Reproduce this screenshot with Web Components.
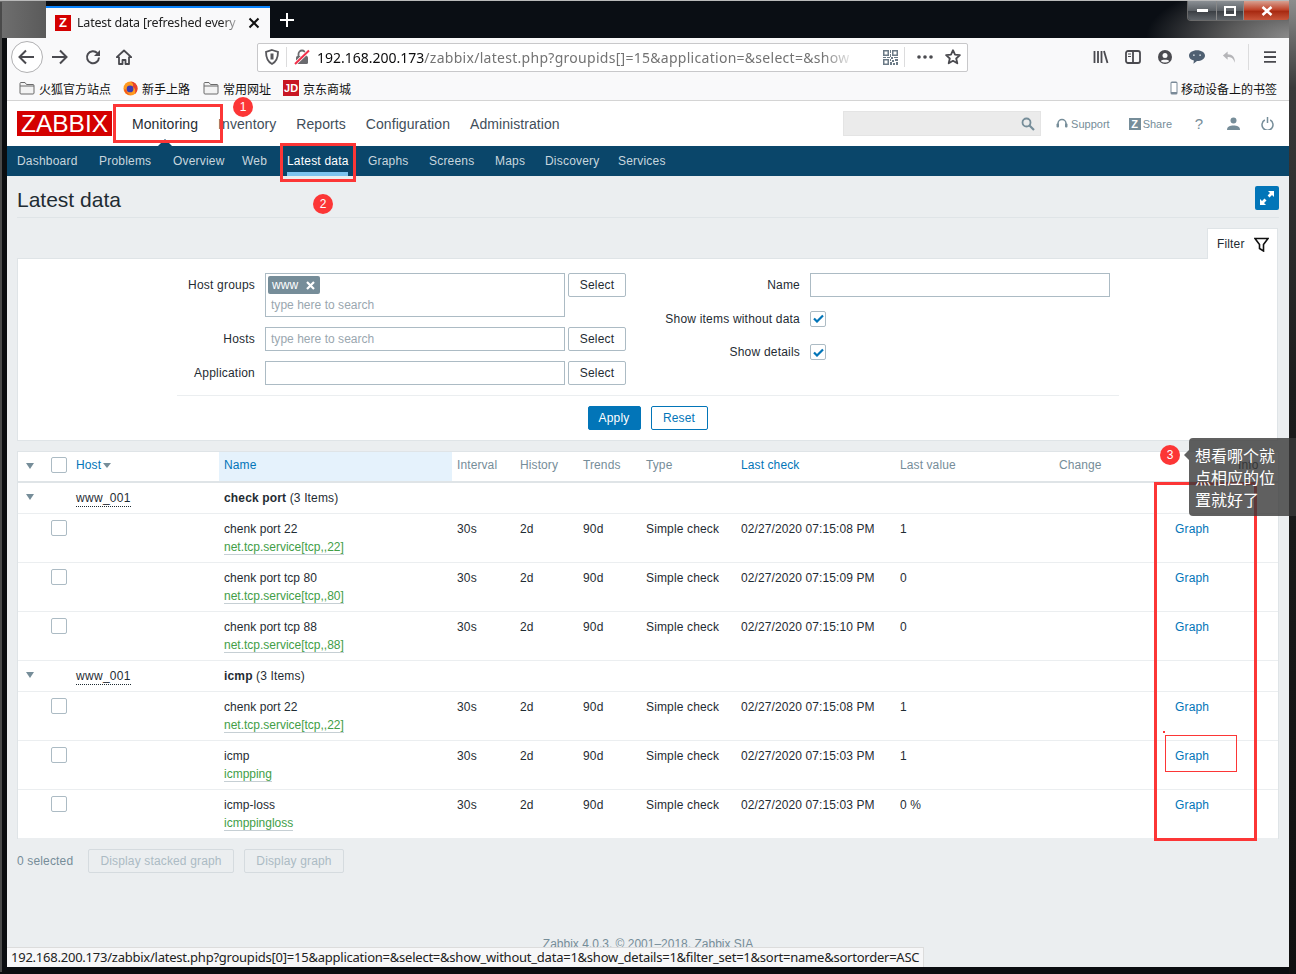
<!DOCTYPE html>
<html>
<head>
<meta charset="utf-8">
<title>Latest data</title>
<style>
html, body { margin: 0; padding: 0; background: #0a0e14; }
body { font-family: "Liberation Sans", Arial, sans-serif; font-size: 12px; }
</style>
</head>
<body>

<browser-frame>
  <zbx-header></zbx-header>
  <zbx-nav></zbx-nav>
  <zbx-content>
    <zbx-title></zbx-title>
    <zbx-filter></zbx-filter>
    <zbx-table>
      <zbx-head></zbx-head>
      <zbx-group host="www_001" app="check port"></zbx-group>
      <zbx-item name="chenk port 22" key="net.tcp.service[tcp,,22]" check="02/27/2020 07:15:08 PM" value="1"></zbx-item>
      <zbx-item name="chenk port tcp 80" key="net.tcp.service[tcp,,80]" check="02/27/2020 07:15:09 PM" value="0"></zbx-item>
      <zbx-item name="chenk port tcp 88" key="net.tcp.service[tcp,,88]" check="02/27/2020 07:15:10 PM" value="0"></zbx-item>
      <zbx-group host="www_001" app="icmp"></zbx-group>
      <zbx-item name="chenk port 22" key="net.tcp.service[tcp,,22]" check="02/27/2020 07:15:08 PM" value="1"></zbx-item>
      <zbx-item name="icmp" key="icmpping" check="02/27/2020 07:15:03 PM" value="1"></zbx-item>
      <zbx-item name="icmp-loss" key="icmppingloss" check="02/27/2020 07:15:03 PM" value="0 %"></zbx-item>
    </zbx-table>
    <zbx-actions></zbx-actions>
    <zbx-footer></zbx-footer>
  </zbx-content>
  <note-layer></note-layer>
</browser-frame>

<script>
// icons used in more than one element
const folderIcon = `<svg width="16" height="14" viewBox="0 0 16 14"><path d="M1 2.500C1 1.700 1.500 1.500 2 1.500h4l1.500 2H14c.6 0 1 .4 1 1V12c0 .6-.4 1-1 1H2c-.6 0-1-.4-1-1z" fill="#f3f3f3" stroke="#6b6b6b"/><path d="M1 5h14" stroke="#6b6b6b"/></svg>`;

class BrowserFrame extends HTMLElement {
  constructor() {
    super();
    this.attachShadow({ mode: 'open' }).innerHTML = `
    <style>
      :host { display: flex; flex-direction: column; position: relative; width: 1296px; height: 974px; overflow: hidden;
        background: #0b0d10; font-family: "Liberation Sans", Arial, sans-serif; }
      .side-l { position: absolute; left: 0; top: 2px; bottom: 2px; width: 2px; background: #4a4a4a; }
      .side-r { position: absolute; right: 0; top: 0; bottom: 0; width: 7px; background: linear-gradient(#8d8d8d, #3a3a3a 9%, #1c1c1c 40%, #101010); }
      .titlebar { height: 38px; flex: none; display: flex; position: relative; padding-left: 46px; box-sizing: border-box;
        border-top: 1px solid #b9b9b9;
        background: radial-gradient(150px 60px at 100% 100%, #8f8f8f, #5a5a5a 45%, rgba(10,14,20,0) 100%),
          linear-gradient(90deg, #6f6f6f, #5a5a5a 46px, #0a0e14 46px); }
      .tab { width: 224px; height: 32px; margin-top: 5px; background: #f9f9fa; border-top: 2px solid #0a84ff; box-sizing: border-box;
        display: flex; align-items: center; padding-left: 9px; }
      .fav { width: 16px; height: 16px; background: #d40000; color: #fff; font: bold 13px/16px "Liberation Sans", sans-serif; text-align: center; flex: none; }
      .tab-text { width: 161px; margin: -1px 0 0 6px; font: 12.500px "Noto Sans", sans-serif; color: #222; white-space: nowrap; overflow: hidden; letter-spacing: -.2px;
        -webkit-mask-image: linear-gradient(90deg, #000 90%, rgba(0,0,0,.25)); }
      .tab svg { margin-left: 10px; }
      .plus { margin: 12px 0 0 10px; }
      .ctl { position: absolute; top: 0; right: 6px; display: flex; height: 19px; border: 1px solid #6a6a6a; border-top: 0; border-radius: 0 0 4px 4px; overflow: hidden; }
      .ctl div { display: flex; align-items: center; justify-content: center; border-right: 1px solid #888;
        background: linear-gradient(#8a8f94, #5c6166 50%, #3c4045 55%, #5f6469); }
      .ctl .mn { width: 28px; } .ctl .mx { width: 26px; }
      .ctl .cl { width: 45px; border: 0; background: linear-gradient(#d8a090, #c0452c 45%, #a82a12 55%, #c8553a); }
      .body { flex: 1; margin: 0 7px 7px; display: flex; flex-direction: column; min-height: 0; background: #f9f9fa; }
      .toolbar { height: 38px; flex: none; display: flex; align-items: center; padding: 0 11px 0 4px; box-sizing: border-box; }
      .back { width: 32px; height: 32px; border-radius: 50%; border: 1px solid #b1b1b3; background: #fff; display: flex; align-items: center; justify-content: center; flex: none; box-sizing: border-box; }
      .tb { flex: none; display: flex; }
      .url { margin-left: 125px; width: 711px; height: 29px; background: #fff; border: 1px solid #c8c8ca; border-radius: 2px; box-sizing: border-box; display: flex; align-items: center; flex: none; padding-left: 7px; }
      .sep { width: 1px; height: 20px; background: #dcdcdd; flex: none; }
      .addr { width: 532px; margin: 1px 0 0 7px; font: 14px "Noto Sans", sans-serif; white-space: nowrap; overflow: hidden; color: #737373; flex: none; letter-spacing: .28px;
        -webkit-mask-image: linear-gradient(90deg, #000 95%, rgba(0,0,0,.2)); }
      .addr b { font-weight: normal; color: #0c0c0d; letter-spacing: 0; }
      .bookmarks { height: 24px; flex: none; display: flex; align-items: center; padding: 0 12px 0 13px; border-bottom: 1px solid #d4d4d4; font: 12px "Noto Sans CJK SC", sans-serif; color: #111; box-sizing: content-box; }
      .bm { display: flex; align-items: center; gap: 4px; margin-right: 12px; }
      .jd { width: 16px; height: 16px; background: #c81623; color: #fff; font: bold 11px/16px "Liberation Sans", sans-serif; text-align: center; }
      .mobile { margin-left: auto; display: flex; align-items: center; gap: 3px; }
      .page { flex: 1; min-height: 0; overflow: hidden; background: #ebeef0; display: flex; flex-direction: column; letter-spacing: .15px; }
      .status { position: absolute; left: 7px; bottom: 7px; height: 20px; width: 917px; box-sizing: border-box; background: #f7f7f8; border-top: 1px solid #dcdcdc; border-right: 1px solid #dcdcdc;
        font: 13px/19px "Noto Sans", sans-serif; color: #222; padding-left: 4px; white-space: nowrap; overflow: hidden; letter-spacing: -.233px; }
    </style>
    <div class="titlebar">
      <div class="tab">
        <div class="fav">Z</div>
        <div class="tab-text">Latest data [refreshed every</div>
        <svg width="12" height="12" viewBox="0 0 12 12"><path d="M1.500 1.500l9 9M10.500 1.500l-9 9" stroke="#111" stroke-width="2"/></svg>
      </div>
      <svg class="plus" width="14" height="14" viewBox="0 0 14 14"><path d="M7 0v14M0 7h14" stroke="#fff" stroke-width="2"/></svg>
      <div class="ctl">
        <div class="mn"><svg width="11" height="5"><rect y="1" width="11" height="3" fill="#fff"/></svg></div>
        <div class="mx"><svg width="12" height="10"><rect x="1" y="1" width="10" height="8" fill="none" stroke="#fff" stroke-width="2"/></svg></div>
        <div class="cl"><svg width="12" height="10" viewBox="0 0 12 10"><path d="M1.500 1l9 8M10.500 1l-9 8" stroke="#fff" stroke-width="2.600"/></svg></div>
      </div>
    </div>
    <div class="side-l"></div>
    <div class="side-r"></div>
    <div class="body">
      <div class="toolbar">
        <div class="back"><svg width="18" height="18" viewBox="0 0 18 18"><path d="M1.500 9H16M8 2.500 1.500 9 8 15.500" fill="none" stroke="#4a4a4f" stroke-width="2"/></svg></div>
        <svg class="tb" style="margin-left:7px" width="18" height="18" viewBox="0 0 18 18"><path d="M2 9h14.500M10 2.500 16.500 9 10 15.500" fill="none" stroke="#4a4a4f" stroke-width="2"/></svg>
        <svg class="tb" style="margin-left:17px" width="16" height="16" viewBox="0 0 16 16"><path d="M14 8.500A6 6 0 1 1 12.300 4" fill="none" stroke="#4a4a4f" stroke-width="2"/><path d="M15 1v6H9z" fill="#4a4a4f"/></svg>
        <svg class="tb" style="margin-left:15px" width="16" height="16" viewBox="0 0 16 16"><path d="M8 1.500.8 8.200h2.200V15h3.500v-4h3v4H13V8.200h2.200z" fill="none" stroke="#4a4a4f" stroke-width="1.800" stroke-linejoin="round"/></svg>
        <div class="url">
          <svg width="14" height="16" viewBox="0 0 14 16"><path d="M7 1 13 2.800C13 9 11 13 7 15 3 13 1 9 1 2.800z" fill="none" stroke="#58585c" stroke-width="1.800"/><path d="M7 4.500v6" stroke="#58585c" stroke-width="3"/></svg>
          <div class="sep" style="margin-left:7px"></div>
          <svg style="margin-left:7px;flex:none" width="16" height="16" viewBox="0 0 16 16"><path d="M4.500 7V5a3.500 3.500 0 0 1 7 0v2" fill="none" stroke="#6a6a6e" stroke-width="1.800"/><rect x="2" y="7" width="12" height="8" rx="1.500" fill="#6a6a6e"/><path d="M1 15 15 1.500" stroke="#fff" stroke-width="3.500"/><path d="M1 15 15 1.500" stroke="#f0304a" stroke-width="2"/></svg>
          <div class="addr"><b>192.168.200.173</b>/zabbix/latest.php?groupids[]=15&amp;application=&amp;select=&amp;show</div>
          <svg style="margin-left:34px;flex:none" width="15" height="15" viewBox="0 0 15 15" fill="#6b7a86"><path d="M0 0h6v6H0zm1.500 1.500v3h3v-3zM9 0h6v6H9zm1.500 1.500v3h3v-3zM0 9h6v6H0zm1.500 1.500v3h3v-3z" fill-rule="evenodd"/><path d="M7 0h1v3H7zM7 4h1v3H7zM0 7h3v1H0zM4 7h3v1H4zM8 7h2v2H8zM11 7h4v1h-4zM7 9h1v2H7zM9 10h2v2H9zM12 9h3v2h-3zM7 12h2v3H7zM10 13h2v2h-2zM13 12h2v3h-2z"/></svg>
          <div class="sep" style="margin-left:6px"></div>
          <svg style="margin-left:12px;flex:none" width="16" height="4" viewBox="0 0 16 4" fill="#4a4a4f"><circle cx="2" cy="2" r="1.800"/><circle cx="8" cy="2" r="1.800"/><circle cx="14" cy="2" r="1.800"/></svg>
          <svg style="margin-left:12px;flex:none" width="16" height="16" viewBox="0 0 16 16"><path d="M8 1.200 10 5.700l4.900.5-3.700 3.300 1.100 4.800L8 11.800l-4.300 2.500 1.100-4.800L1.100 6.200 6 5.700z" fill="none" stroke="#4a4a4f" stroke-width="1.800" stroke-linejoin="round"/></svg>
        </div>
        <svg class="tb" style="margin-left:125px" width="16" height="14" viewBox="0 0 16 14"><path d="M1.500 1v12M5 1v12M8.500 1v12M11 1l3.500 12" stroke="#4a4a4f" stroke-width="1.800" fill="none"/></svg>
        <svg class="tb" style="margin-left:16px" width="16" height="14" viewBox="0 0 16 14"><rect x="1" y="1" width="14" height="12" rx="2" fill="none" stroke="#4a4a4f" stroke-width="1.800"/><path d="M8 1v12" stroke="#4a4a4f" stroke-width="1.800"/><path d="M3 4h3M3 6.500h3" stroke="#4a4a4f"/></svg>
        <svg class="tb" style="margin-left:17px" width="14" height="14" viewBox="0 0 14 14"><circle cx="7" cy="7" r="7" fill="#4a4a4f"/><circle cx="7" cy="5.500" r="2.500" fill="#f9f9fa"/><path d="M2.800 11.200C3.500 9.300 10.500 9.300 11.200 11.200 9 13 5 13 2.800 11.200z" fill="#f9f9fa"/></svg>
        <svg class="tb" style="margin-left:17px" width="16" height="14" viewBox="0 0 18 15"><path d="M9 0c5 0 9 2.600 9 6s-4 6-9 6l-4 3 .5-3.500C2 10.500 0 8.500 0 6c0-3.400 4-6 9-6z" fill="#4f6072"/><g fill="#c9d2da"><circle cx="5.500" cy="5.500" r="1"/><circle cx="12.500" cy="5.500" r="1"/></g></svg>
        <svg class="tb" style="margin-left:17px" width="15" height="14" viewBox="0 0 16 14"><path d="M6 1 1 5.500 6 10V7c3.500 0 6 1 7.500 6C14.500 7.500 11 4 6 4z" fill="#b5b5b8"/></svg>
        <div class="sep" style="margin-left:11px;height:26px"></div>
        <svg class="tb" style="margin-left:15px" width="12" height="12" viewBox="0 0 12 12"><path d="M0 1.200h12M0 6h12M0 10.800h12" stroke="#4a4a4f" stroke-width="1.800"/></svg>
      </div>
      <div class="bookmarks">
        <div class="bm" style="margin-left:-1px">${folderIcon}<span>火狐官方站点</span></div>
        <div class="bm" style="margin-right:13px">
          <svg width="15" height="15" viewBox="0 0 16 16"><circle cx="8" cy="8" r="7.500" fill="#ff9a1f"/><path d="M8 .5A7.500 7.500 0 0 1 15.500 8c0 2-1 4.500-3 6C14 11 13 7 10 6 12 4 10 1.500 8 .5z" fill="#e8412c"/><circle cx="7.500" cy="8.500" r="3.600" fill="#3d3bb0"/><path d="M1 9c1 4 4 6 8 6-3-.5-5-2.500-5.500-6z" fill="#f5541f"/></svg>
          <span>新手上路</span>
        </div>
        <div class="bm">${folderIcon}<span>常用网址</span></div>
        <div class="bm"><div class="jd">JD</div><span>京东商城</span></div>
        <div class="mobile">
          <svg width="8" height="14" viewBox="0 0 8 14"><rect x=".5" y=".5" width="7" height="13" rx="1.500" fill="#7a8a98" /><rect x="1.500" y="2" width="5" height="9" fill="#fff"/></svg>
          <span>移动设备上的书签</span>
        </div>
      </div>
      <div class="page"><slot></slot></div>
      <div class="status">192.168.200.173/zabbix/latest.php?groupids[0]=15&amp;application=&amp;select=&amp;show_without_data=1&amp;show_details=1&amp;filter_set=1&amp;sort=name&amp;sortorder=ASC</div>
    </div>`;
  }
}

class ZbxHeader extends HTMLElement {
  constructor() {
    super();
    this.attachShadow({ mode: 'open' }).innerHTML = `
    <style>
      :host { display: flex; align-items: center; height: 45px; flex: none; background: #fff; padding: 0 15px 0 10px; position: relative; color: #44525e; letter-spacing: 0; }
      .logo { width: 95px; height: 25px; background: #d40000; color: #fff; font: 24.500px/26px "Liberation Sans", sans-serif; text-align: center; flex: none; }
      nav { display: flex; gap: 20px; margin-left: 20px; font-size: 14px; color: #3f4e5a; letter-spacing: .07px; }
      nav .on { color: #1f2c33; }
      .tri { position: absolute; left: 151px; bottom: 0; width: 0; height: 0; border: 7px solid transparent; border-top: 0; border-bottom: 7px solid #0a466a; }
      .search { margin-left: auto; width: 198px; height: 25px; background: #ebebeb; border: 1px solid #e4e4e4; box-sizing: border-box; display: flex; align-items: center; justify-content: flex-end; padding-right: 5px; }
      .side { display: flex; align-items: center; margin-left: 15px; color: #768d99; font-size: 11px; gap: 3px; }
      .zb { width: 12px; height: 12px; background: #768d99; color: #fff; font: bold 11px/12px "Liberation Sans", sans-serif; text-align: center; }
      .q { font-size: 15px; width: 10px; justify-content: center; }
    </style>
    <div class="logo">ZABBIX</div>
    <nav><span class="on">Monitoring</span><span>Inventory</span><span>Reports</span><span>Configuration</span><span>Administration</span></nav>
    <div class="tri"></div>
    <div class="search"><svg width="14" height="14" viewBox="0 0 14 14"><circle cx="5.500" cy="5.500" r="4" fill="none" stroke="#768d99" stroke-width="1.800"/><path d="M8.500 8.500 13 13" stroke="#768d99" stroke-width="2.200"/></svg></div>
    <div class="side"><svg width="12" height="12" viewBox="0 0 12 12"><path d="M2 8V5.500a4 4 0 0 1 8 0V8" fill="none" stroke="#768d99" stroke-width="1.500"/><rect x="0.500" y="5.500" width="2.500" height="4" rx="1" fill="#768d99"/><rect x="9" y="5.500" width="2.500" height="4" rx="1" fill="#768d99"/></svg><span>Support</span></div>
    <div class="side" style="margin-left:19px;gap:2px"><div class="zb">Z</div><span>Share</span></div>
    <div class="side q" style="margin-left:22px">?</div>
    <div class="side" style="margin-left:23px"><svg width="13" height="13" viewBox="0 0 13 13"><circle cx="6.500" cy="3.500" r="3" fill="#768d99"/><path d="M0 13c0-3.500 3-4.500 6.500-4.500S13 9.500 13 13z" fill="#768d99"/></svg></div>
    <div class="side" style="margin-left:21px"><svg width="13" height="13" viewBox="0 0 13 13"><path d="M3.800 3A5.500 5.500 0 1 0 9.200 3" fill="none" stroke="#768d99" stroke-width="1.500"/><path d="M6.500 0v6" stroke="#768d99" stroke-width="1.500"/></svg></div>`;
  }
}

class ZbxNav extends HTMLElement {
  constructor() {
    super();
    // widths follow the hinted Arial of the original, Liberation comes out a bit narrower
    const items = [['Dashboard', 62], ['Problems', 54], ['Overview', 49], ['Web', 25], ['Latest data', 61], ['Graphs', 41], ['Screens', 46], ['Maps', 30], ['Discovery', 53], ['Services', 47]];
    this.attachShadow({ mode: 'open' }).innerHTML = `
    <style>
      :host { display: flex; gap: 20px; height: 30px; flex: none; background: #0a466a; padding-left: 10px; color: #c8d6de; font-size: 12px; line-height: 30px; letter-spacing: .2px; }
      span { display: block; height: 30px; box-sizing: border-box; white-space: nowrap; }
      .on { color: #fff; border-bottom: 4px solid #7cc3ee; }
    </style>
    ${items.map(i => `<span class="${i[0] === 'Latest data' ? 'on' : ''}" style="width:${i[1]}px">${i[0]}</span>`).join('')}`;
  }
}

class ZbxContent extends HTMLElement {
  constructor() {
    super();
    this.attachShadow({ mode: 'open' }).innerHTML = `
    <style>:host { display: flex; flex-direction: column; flex: 1; padding: 0 10px; background: #ebeef0; }</style>
    <slot></slot>`;
  }
}

class ZbxTitle extends HTMLElement {
  constructor() {
    super();
    this.attachShadow({ mode: 'open' }).innerHTML = `
    <style>
      :host { display: flex; align-items: flex-start; justify-content: space-between; height: 41px; box-sizing: content-box; flex: none; border-bottom: 1px solid #dfe4e7; letter-spacing: 0; }
      h1 { margin: 12px 0 0; font: normal 21px/24px "Liberation Sans", sans-serif; color: #1f2c33; }
      .full { width: 24px; height: 24px; margin-top: 10px; border-radius: 2px; background: #0275b8; display: flex; align-items: center; justify-content: center; }
    </style>
    <h1>Latest data</h1>
    <div class="full"><svg width="14" height="14" viewBox="0 0 14 14" fill="#fff"><path d="M8 0h6v6l-2-2-2.500 2.500-1.900-2L10 2zM0 8l2 2 2.500-2.500 2 2L4 12l2 2H0z"/></svg></div>`;
  }
}

class ZbxFilter extends HTMLElement {
  constructor() {
    super();
    const check = `<span class="cb"><svg width="11" height="9" viewBox="0 0 11 9"><path d="M1 4.500 4 7.500 10 1.500" fill="none" stroke="#0275b8" stroke-width="2.200"/></svg></span>`;
    this.attachShadow({ mode: 'open' }).innerHTML = `
    <style>
      :host { display: block; flex: none; color: #1f2c33; font-size: 12px; }
      .tabs { display: flex; justify-content: flex-end; height: 31px; margin-top: 9px; padding-right: 1px; }
      .tab { width: 71px; height: 31px; box-sizing: border-box; background: #fff; border: 1px solid #dfe4e7; border-bottom: 0; display: flex; align-items: center; padding: 0 0 0 9px; gap: 9px; position: relative; top: 1px; }
      .box { background: #fff; border: 1px solid #dfe4e7; margin-right: 1px; height: 183px; box-sizing: border-box; padding-top: 14px; }
      .cols { display: flex; height: 122px; }
      .left { display: grid; grid-template-columns: 237px 310px 61px; grid-template-rows: 44px 24px 24px; row-gap: 10px; }
      .right { display: grid; grid-template-columns: 174px 310px; grid-template-rows: 24px 24px 24px; row-gap: 9.500px; }
      .lbl { text-align: right; line-height: 24px; height: 24px; white-space: nowrap; letter-spacing: .2px; }
      .inp { height: 24px; margin-left: 10px; width: 300px; border: 1px solid #acbbc4; box-sizing: border-box; background: #fff; color: #9aa7af; padding-left: 5px; line-height: 22px; letter-spacing: .03px; }
      .multi { height: 44px; padding: 2px; line-height: 16px; }
      .tag { display: inline-flex; align-items: center; gap: 8px; height: 18px; padding: 0 5px 0 4px; background: #768d99; color: #fff; border-radius: 2px; }
      .hint { margin: 3px 0 0 3px; }
      .sel { margin-left: 3px; width: 58px; height: 24px; border: 1px solid #acbbc4; border-radius: 2px; box-sizing: border-box; text-align: center; line-height: 22px; background: #fff; }
      .chk { display: flex; align-items: center; height: 24px; margin-left: 10px; }
      .cb { width: 16px; height: 16px; border: 1px solid #acbbc4; border-radius: 2px; box-sizing: border-box; display: flex; align-items: center; justify-content: center; background: #fff; }
      .rule { margin: 0 158px 0 159px; border-top: 1px solid #ebeef0; height: 0; }
      .btns { display: flex; justify-content: center; gap: 10px; margin-top: 10px; }
      .b { height: 24px; box-sizing: border-box; border-radius: 2px; line-height: 22px; text-align: center; border: 1px solid #0275b8; }
      .apply { width: 53px; background: #0275b8; color: #fff; }
      .reset { width: 57px; background: #fff; color: #0275b8; }
    </style>
    <div class="tabs"><div class="tab"><span>Filter</span>
      <svg width="15" height="15" viewBox="0 0 15 15"><path d="M1 1.500h13L9.500 7.500V14L5.500 11.500v-4z" fill="none" stroke="#111" stroke-width="1.600" stroke-linejoin="miter"/></svg></div></div>
    <div class="box">
      <div class="cols">
        <div class="left">
          <div class="lbl">Host groups</div>
          <div class="inp multi"><span class="tag">www <svg width="9" height="9" viewBox="0 0 9 9"><path d="M1 1l7 7M8 1 1 8" stroke="#fff" stroke-width="2.200"/></svg></span><div class="hint">type here to search</div></div>
          <div class="sel">Select</div>
          <div class="lbl">Hosts</div><div class="inp">type here to search</div><div class="sel">Select</div>
          <div class="lbl">Application</div><div class="inp"></div><div class="sel">Select</div>
        </div>
        <div class="right">
          <div class="lbl">Name</div><div class="inp"></div>
          <div class="lbl">Show items without data</div><div class="chk">${check}</div>
          <div class="lbl">Show details</div><div class="chk">${check}</div>
        </div>
      </div>
      <div class="rule"></div>
      <div class="btns"><div class="b apply">Apply</div><div class="b reset">Reset</div></div>
    </div>`;
  }
}

class ZbxTable extends HTMLElement {
  constructor() {
    super();
    this.attachShadow({ mode: 'open' }).innerHTML = `
    <style>
      :host { display: block; flex: none; margin-top: 10px; background: #fff; border: 1px solid #dfe4e7; border-bottom: 0; color: #1f2c33; font-size: 12px;
        --cols: 28px 25px 148px 233px 63px 63px 63px 95px 159px 159px 116px 63px 45px; }
    </style>
    <slot></slot>`;
  }
}

const cellCss = `
  :host { display: grid; grid-template-columns: var(--cols); box-sizing: border-box; background: #fff; }
  .c { padding-left: 5px; white-space: nowrap; min-width: 0; }
  .box { width: 16px; height: 16px; border: 1px solid #acbbc4; border-radius: 2px; box-sizing: border-box; background: #fff; margin-left: 5px; }
  .arrow { width: 0; height: 0; border: 4.500px solid transparent; border-top: 6px solid #768d99; border-bottom: 0; margin-left: 8px; }
`;

class ZbxHead extends HTMLElement {
  constructor() {
    super();
    this.attachShadow({ mode: 'open' }).innerHTML = `
    <style>${cellCss}
      :host { height: 31px; border-bottom: 2px solid #dfe4e7; line-height: 27px; color: #768d99; letter-spacing: .1px; }
      a { color: #0275b8; }
      .arrow { margin-top: 11px; }
      .box { margin-top: 5px; }
      .nm { background: #e5f2fc; }
      .s { display: inline-block; border: 4px solid transparent; border-top: 5px solid #768d99; border-bottom: 0; margin-left: 2px; vertical-align: 1px; }
    </style>
    <div><div class="arrow"></div></div>
    <div><div class="box"></div></div>
    <div class="c"><a>Host</a><span class="s"></span></div>
    <div class="c nm"><a>Name</a></div>
    <div class="c">Interval</div><div class="c">History</div><div class="c">Trends</div><div class="c">Type</div>
    <div class="c"><a>Last check</a></div>
    <div class="c">Last value</div><div class="c">Change</div><div class="c"></div>
    <div class="c" style="color:#1f2c33">Info</div>`;
  }
}

class ZbxGroup extends HTMLElement {
  connectedCallback() {
    this.attachShadow({ mode: 'open' }).innerHTML = `
    <style>${cellCss}
      :host { height: 31px; border-bottom: 1px solid #ebeef0; line-height: 30px; }
      .arrow { margin-top: 11px; }
      .h { border-bottom: 1px dotted #1f2c33; padding-bottom: 1px; letter-spacing: .3px; }
      .rest { grid-column: 4 / -1; }
      b { font-weight: bold; }
    </style>
    <div><div class="arrow"></div></div><div></div>
    <div class="c"><span class="h">${this.getAttribute('host')}</span></div>
    <div class="c rest"><b>${this.getAttribute('app')}</b> (3 Items)</div>`;
  }
}

class ZbxItem extends HTMLElement {
  connectedCallback() {
    this.attachShadow({ mode: 'open' }).innerHTML = `
    <style>${cellCss}
      :host { height: 49px; border-bottom: 1px solid #ebeef0; padding-top: 7px; line-height: 16px; }
      .box { margin-top: -1px; }
      .nm { letter-spacing: .05px; }
      .key { margin-top: 2px; letter-spacing: -.01px; }
      .key span { color: #429e47; border-bottom: 1px solid #c6cfd4; }
      .when { letter-spacing: .1px; }
      a { color: #0275b8; }
    </style>
    <div></div><div><div class="box"></div></div><div></div>
    <div class="c"><div class="nm">${this.getAttribute('name')}</div><div class="key"><span>${this.getAttribute('key')}</span></div></div>
    <div class="c">30s</div><div class="c">2d</div><div class="c">90d</div><div class="c">Simple check</div>
    <div class="c when">${this.getAttribute('check')}</div>
    <div class="c">${this.getAttribute('value')}</div>
    <div class="c"></div>
    <div class="c"><a>Graph</a></div>
    <div class="c"></div>`;
  }
}

class ZbxActions extends HTMLElement {
  constructor() {
    super();
    this.attachShadow({ mode: 'open' }).innerHTML = `
    <style>
      :host { display: flex; align-items: center; flex: none; margin-top: 10px; height: 24px; color: #768d99; font-size: 12px; }
      .d { height: 24px; box-sizing: border-box; border: 1px solid #d5dbdf; border-radius: 2px; color: #acbbc4; line-height: 22px; text-align: center; }
    </style>
    <span style="width:71px">0 selected</span>
    <div class="d" style="width:146px">Display stacked graph</div>
    <div class="d" style="width:100px;margin-left:10px">Display graph</div>`;
  }
}

class ZbxFooter extends HTMLElement {
  constructor() {
    super();
    this.attachShadow({ mode: 'open' }).innerHTML = `
    <style>:host { display: block; flex: none; margin-top: 64px; text-align: center; color: #768d99; font-size: 12px; line-height: 14px; letter-spacing: 0; }</style>
    Zabbix 4.0.3. © 2001–2018, Zabbix SIA`;
  }
}

// red marks somebody drew over the screenshot
class NoteLayer extends HTMLElement {
  constructor() {
    super();
    this.attachShadow({ mode: 'open' }).innerHTML = `
    <style>
      :host { position: absolute; left: 0; top: 0; width: 1296px; height: 974px; pointer-events: none; letter-spacing: 0; }
      div { position: absolute; box-sizing: border-box; }
      .box { border: 3px solid #fc3636; }
      .n { width: 20px; height: 20px; border-radius: 50%; background: #fc3636; color: #fff; font: 12px/20px "Liberation Sans", sans-serif; text-align: center; }
      .tip { left: 1189px; top: 438px; width: 107px; height: 78px; background: rgba(56,56,56,.8); border-radius: 4px 0 0 4px; color: #fff; font: 16px/22px "Noto Sans CJK SC", sans-serif; padding: 6px 0 0 6px; }
      .tip i { position: absolute; left: -5px; top: 12px; border: 5px solid transparent; border-left: 0; border-right: 5px solid rgba(56,56,56,.8); }
    </style>
    <div class="box" style="left:113px;top:104px;width:110px;height:39px"></div>
    <div class="box" style="left:280px;top:143px;width:76px;height:39px"></div>
    <div class="box" style="left:1154px;top:482px;width:103px;height:359px"></div>
    <div class="box" style="left:1165px;top:735px;width:72px;height:37px;border-width:1px"></div>
    <div style="left:1163px;top:731px;width:2px;height:2px;background:#fc3636"></div>
    <div class="n" style="left:233px;top:97px">1</div>
    <div class="n" style="left:313px;top:194px">2</div>
    <div class="n" style="left:1160px;top:445px">3</div>
    <div class="tip"><i></i>想看哪个就<br>点相应的位<br>置就好了</div>`;
  }
}

customElements.define('browser-frame', BrowserFrame);
customElements.define('zbx-header', ZbxHeader);
customElements.define('zbx-nav', ZbxNav);
customElements.define('zbx-content', ZbxContent);
customElements.define('zbx-title', ZbxTitle);
customElements.define('zbx-filter', ZbxFilter);
customElements.define('zbx-table', ZbxTable);
customElements.define('zbx-head', ZbxHead);
customElements.define('zbx-group', ZbxGroup);
customElements.define('zbx-item', ZbxItem);
customElements.define('zbx-actions', ZbxActions);
customElements.define('zbx-footer', ZbxFooter);
customElements.define('note-layer', NoteLayer);
</script>
</body>
</html>
